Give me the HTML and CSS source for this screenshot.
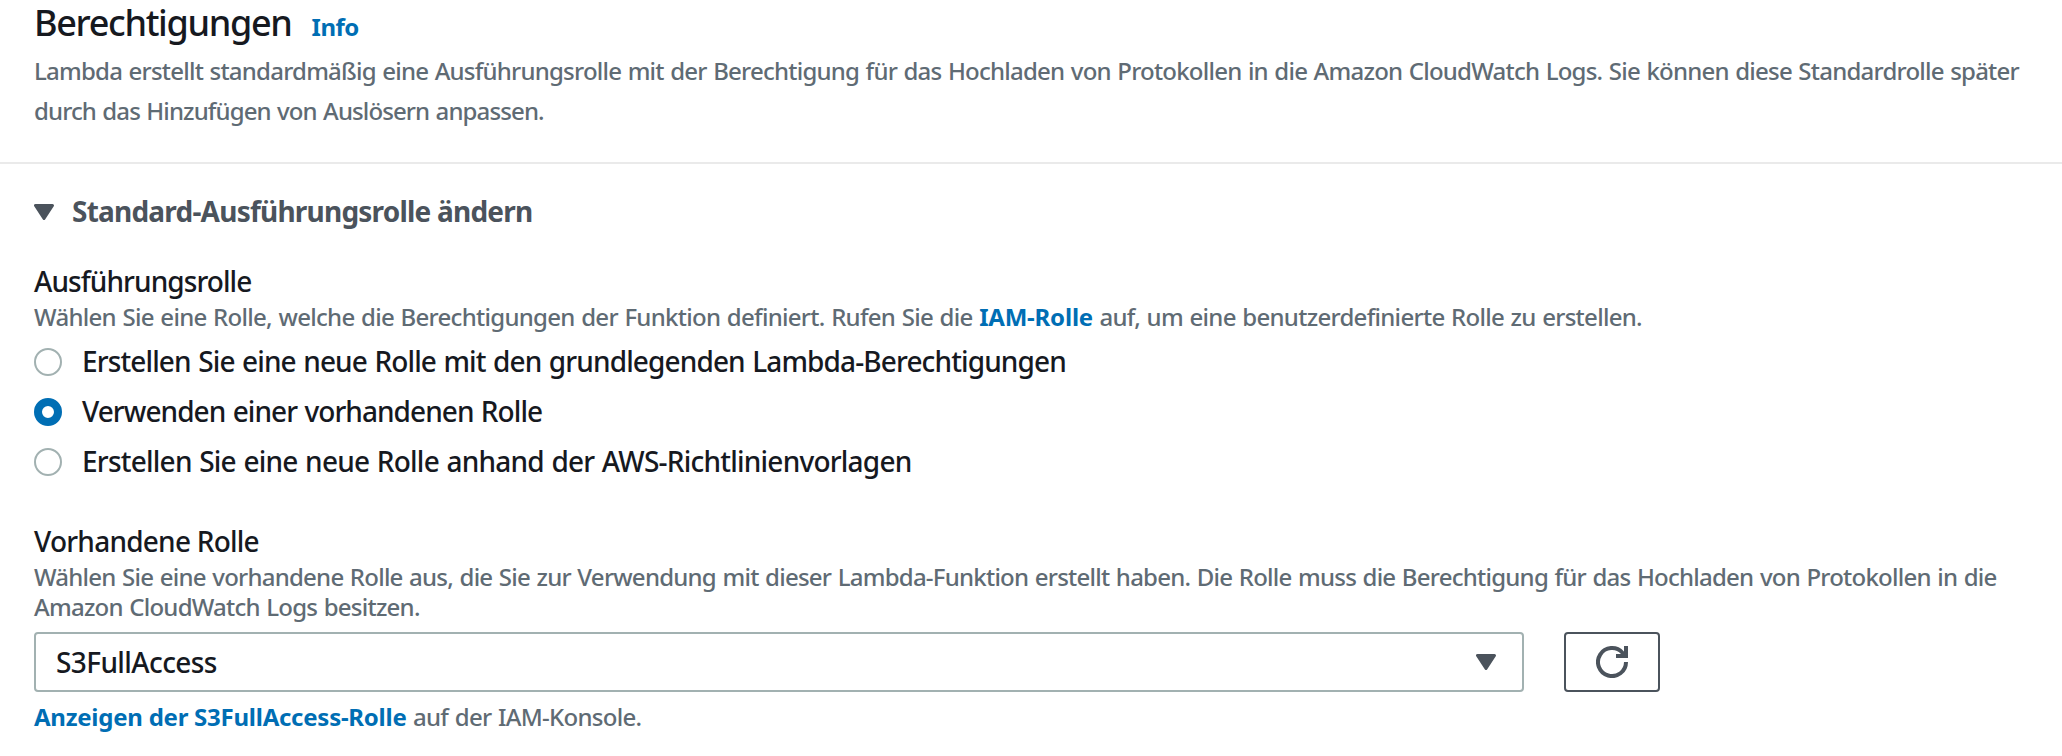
FILE: index.html
```html
<!DOCTYPE html>
<html lang="de">
<head>
<meta charset="utf-8">
<title>Berechtigungen</title>
<link rel="stylesheet" href="styles.css">
</head>
<body>
<main class="panel">
  <header class="panel-header">
    <div class="title-row"><h2 class="title">Berechtigungen</h2><a class="link info">Info</a></div>
    <p class="description"><span class="desc-first">Lambda erstellt standardmäßig eine Ausführungsrolle mit der Berechtigung für das Hochladen von Protokollen in die Amazon CloudWatch Logs. Sie können diese Standardrolle später</span><br><span class="desc-second">durch das Hinzufügen von Auslösern anpassen.</span></p>
  </header>
  <section class="content">
    <h3 class="expander"><svg class="caret" viewBox="0 0 20 16"><path d="M1.5 1.5H18.5L10 14.5Z"/></svg>Standard-Ausführungsrolle ändern</h3>
    <div class="field">
      <div class="label label-tight">Ausführungsrolle</div>
      <p class="hint">Wählen Sie eine Rolle, welche die Berechtigungen der Funktion definiert. Rufen Sie die <a class="link">IAM-Rolle</a> auf, um eine benutzerdefinierte Rolle zu erstellen.</p>
      <div class="options">
        <label class="option"><span class="radio"></span><span class="option-text">Erstellen Sie eine neue Rolle mit den grundlegenden Lambda-Berechtigungen</span></label>
        <label class="option"><span class="radio checked"></span><span class="option-text option-text-tight">Verwenden einer vorhandenen Rolle</span></label>
        <label class="option"><span class="radio"></span><span class="option-text option-text-wide">Erstellen Sie eine neue Rolle anhand der AWS-Richtlinienvorlagen</span></label>
      </div>
    </div>
    <div class="field role-field">
      <div class="label">Vorhandene Rolle</div>
      <p class="hint hint-existing">Wählen Sie eine vorhandene Rolle aus, die Sie zur Verwendung mit dieser Lambda-Funktion erstellt haben. Die Rolle muss die Berechtigung für das Hochladen von Protokollen in die<br>Amazon CloudWatch Logs besitzen.</p>
      <div class="control-row">
        <div class="select"><span>S3FullAccess</span><svg class="caret" viewBox="0 0 20 16"><path d="M1.5 1.5H18.5L10 14.5Z"/></svg></div>
        <button class="refresh" aria-label="Aktualisieren"><svg viewBox="0 0 32 32"><path d="M30 16A14 14 0 1 1 26.5 6.8L29.5 10"/><path d="M30 0V10H20"/></svg></button>
      </div>
      <p class="hint hint-link"><a class="link link-role">Anzeigen der S3FullAccess-Rolle</a> auf der IAM-Konsole.</p>
    </div>
  </section>
</main>
</body>
</html>
```
FILE: styles.css
```css
body {
  margin: 0;
  background: #fff;
  color: #16191f;
  font-family: "Noto Sans", sans-serif;
  font-size: 28px;
  font-weight: 500;
  white-space: nowrap;
}

h2, h3, p { margin: 0; }

.panel-header {
  box-sizing: border-box;
  height: 164px;
  padding-left: 34px;
  border-bottom: 2px solid #eaeaea;
}

.title-row {
  display: flex;
  align-items: baseline;
  gap: 20px;
  height: 51px;
  line-height: 46px;
}

.title { font-size: 36px; font-weight: 500; letter-spacing: -1.33px; }
.link { color: #006eb4; font-weight: 700; letter-spacing: -0.2px; word-spacing: 0; }
.info { font-size: 24px; letter-spacing: -0.5px; }

.description { font-size: 24px; line-height: 40px; color: #5f6b74; word-spacing: 1px; }
.desc-first { letter-spacing: -0.775px; }
.desc-second { letter-spacing: -0.89px; }

.content { padding: 25px 0 0 34px; }

.caret {
  flex: none;
  width: 20px;
  height: 16px;
  fill: #4b535c;
  stroke: #4b535c;
  stroke-width: 3;
  stroke-linejoin: round;
}

.expander {
  display: flex;
  align-items: center;
  gap: 18px;
  height: 45px;
  font-size: 28px;
  line-height: 45px;
  color: #4b535c;
  letter-spacing: -0.78px;
}

.field { padding-top: 29px; }
.label { line-height: 36px; letter-spacing: -0.76px; }
.label-tight { letter-spacing: -0.92px; }

.hint {
  margin-top: 3px;
  font-size: 24px;
  line-height: 30px;
  color: #5f6b74;
  letter-spacing: -0.71px;
  word-spacing: 1px;
}
.hint-existing { letter-spacing: -0.762px; }

.options { padding-top: 4px; word-spacing: 1px; }
.option {
  display: flex;
  align-items: center;
  gap: 20px;
  height: 50px;
  line-height: 50px;
}
.option-text { letter-spacing: -0.87px; }
.option-text-tight { letter-spacing: -0.94px; }
.option-text-wide { letter-spacing: -0.77px; }

.radio {
  box-sizing: border-box;
  width: 28px;
  height: 28px;
  margin-top: 2px;
  border: 2px solid #a2b1b1;
  border-radius: 50%;
}
.checked { border: 8px solid #006eb4; }

.role-field { padding-top: 37px; }

.control-row { display: flex; gap: 40px; margin-top: 10px; }

.select {
  box-sizing: border-box;
  display: flex;
  align-items: center;
  justify-content: space-between;
  width: 1490px;
  height: 60px;
  padding: 0 26px 0 20px;
  border: 2px solid #a2b1b1;
  border-radius: 4px;
  letter-spacing: -0.6px;
}

.refresh {
  box-sizing: border-box;
  display: flex;
  align-items: center;
  justify-content: center;
  width: 96px;
  height: 60px;
  padding: 0;
  background: #fff;
  border: 2px solid #4b535c;
  border-radius: 4px;
}
.refresh svg {
  width: 32px;
  height: 32px;
  fill: none;
  stroke: #4b535c;
  stroke-width: 4;
}

.hint-link { margin-top: 10px; }
.link-role { letter-spacing: -0.25px; }
```
